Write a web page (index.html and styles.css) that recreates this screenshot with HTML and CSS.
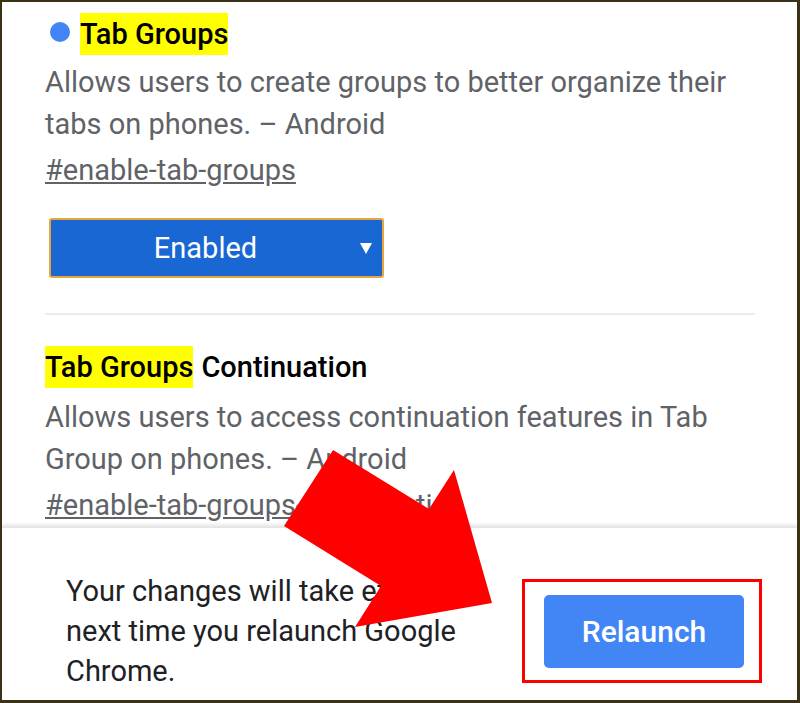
FILE: index.html
```html
<!DOCTYPE html>
<html lang="en">

<head>
    <meta charset="UTF-8">
    <meta name="viewport" content="width=device-width, initial-scale=1.0">
    <title>Experiments</title>
    <link rel="stylesheet" href="styles.css">
</head>

<body>

    <div class="Lista">

        <div class="Flag">
            <h3 class="FlagTitulo">
                <span class="Punto"></span>
                <mark class="Resaltado">Tab Groups</mark>
            </h3>
            <p class="FlagDesc">Allows users to create groups to better organize their tabs on phones. – Android</p>
            <a class="FlagLink" href="#enable-tab-groups">#enable-tab-groups</a>

            <div class="Selector">
                <span class="SelectorTexto">Enabled</span>
                <svg class="SelectorFlecha" width="12" height="11" viewBox="0 0 12 11">
                    <polygon points="0,0 12,0 6,11" fill="#fff" />
                </svg>
            </div>
        </div>

        <div class="Flag">
            <h3 class="FlagTitulo">
                <mark class="Resaltado">Tab Groups</mark> Continuation
            </h3>
            <p class="FlagDesc">Allows users to access continuation features in Tab Group on phones. – Android</p>
            <a class="FlagLink" href="#enable-tab-groups-continuation">#enable-tab-groups-continuation</a>
        </div>

    </div>

    <div class="Relanzar">
        <p class="RelanzarTexto">Your changes will take effect the next time you relaunch Google Chrome.</p>
        <div class="Marco">
            <button type="button" class="BotonRelanzar">Relaunch</button>
        </div>
    </div>

    <!-- flecha roja de la captura -->
    <svg class="Flecha" viewBox="0 0 800 703" width="800" height="703">
        <polygon points="333,450 429,509 454,470 492,603 355,627 381,586 284,526" fill="#ff0000" />
    </svg>

</body>

</html>
```

FILE: styles.css
```css
html {
    margin: 0;
}

body {
    font-family: 'Roboto', 'Liberation Sans', sans-serif;
    background-color: #fff;
    color: #202124;
    margin: 0;
    height: 703px;
    box-sizing: border-box;
    border-style: solid;
    border-color: #3a3217;
    border-width: 2px 3px 3px 2px;
    display: flex;
    flex-direction: column;
    overflow: hidden;
}


.Lista {
    flex: 1;
    overflow: hidden;
    padding: 11px 42px 0 43px;
}


.Flag {
    display: flex;
    flex-direction: column;
    align-items: flex-start;
}

.Flag:first-child {
    padding-bottom: 35px;
    border-bottom: 2px solid #ececec;
    align-items: stretch;
}

.Flag + .Flag {
    margin-top: 31px;
}


.FlagTitulo {
    margin: 0;
    font-size: 29px;
    font-weight: 500;
    line-height: 42px;
    color: #000;
    display: flex;
    align-items: center;
}

.Punto {
    width: 20px;
    height: 20px;
    border-radius: 50%;
    background-color: #4285f4;
    margin: 0 10px 0 5px;
    position: relative;
    top: -2px;
}

.Resaltado {
    background-color: #ffff00;
    color: #000;
    margin-right: 8px;
}


.FlagDesc {
    margin: 6px 0 0 0;
    font-size: 29px;
    line-height: 42px;
    color: #5f6368;
}

.Flag + .Flag .FlagDesc {
    margin-top: 8px;
}


.FlagLink {
    margin-top: 4px;
    font-size: 29px;
    line-height: 42px;
    color: #5f6368;
    text-decoration: underline;
    white-space: nowrap;
    align-self: flex-start;
}


.Selector {
    margin: 27px 0 0 4px;
    width: 335px;
    height: 60px;
    box-sizing: border-box;
    background-color: #1967d2;
    border: 2px solid #e9a43b;
    border-radius: 3px;
    display: flex;
    align-items: center;
    padding: 0 10px 0 0;
    align-self: flex-start;
}

.SelectorTexto {
    flex: 1;
    text-align: center;
    color: #fff;
    font-size: 29px;
}

.SelectorFlecha {
    display: block;
}


.Relanzar {
    position: relative;
    z-index: 1;
    background-color: #fff;
    box-shadow: 0 -2px 4px rgba(0, 0, 0, 0.12);
    border-top: 1px solid #e4e4e4;
    display: flex;
    align-items: center;
    padding: 43px 35px 9px 64px;
}

.RelanzarTexto {
    margin: 0;
    width: 440px;
    font-size: 29px;
    line-height: 40px;
    color: #202124;
}

.Marco {
    margin-left: auto;
    border: 3px solid #ff0000;
    padding: 13px 15px 12px 19px;
}

.BotonRelanzar {
    display: block;
    width: 200px;
    height: 73px;
    border: none;
    border-radius: 5px;
    background-color: #4285f4;
    color: #fff;
    font-family: 'Roboto', 'Liberation Sans', sans-serif;
    font-size: 30px;
    font-weight: 500;
    cursor: pointer;
}


.Flecha {
    position: fixed;
    top: 0;
    left: 0;
    z-index: 2;
    pointer-events: none;
}
```
